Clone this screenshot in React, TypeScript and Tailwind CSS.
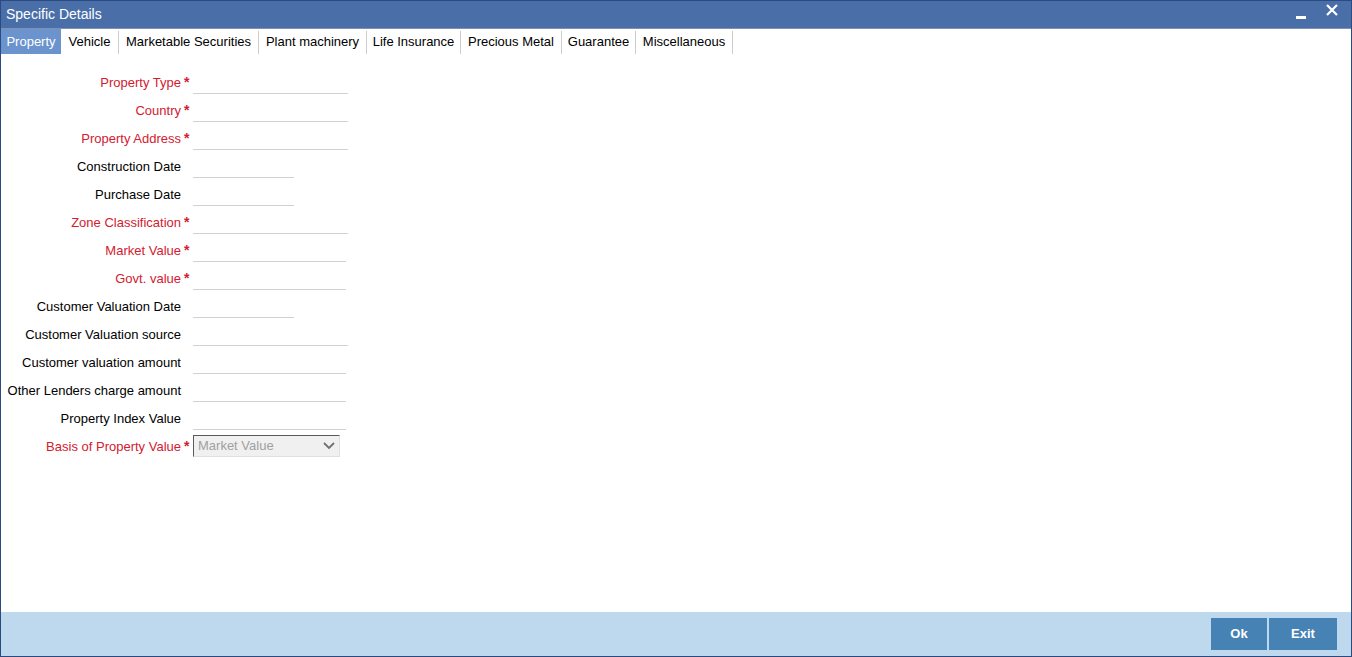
import React from "react";

type Row = { label: string; req?: boolean; w: number };

const rows: Row[] = [
  { label: "Property Type", req: true, w: 155 },
  { label: "Country", req: true, w: 155 },
  { label: "Property Address", req: true, w: 155 },
  { label: "Construction Date", w: 101 },
  { label: "Purchase Date", w: 101 },
  { label: "Zone Classification", req: true, w: 155 },
  { label: "Market Value", req: true, w: 153 },
  { label: "Govt. value", req: true, w: 153 },
  { label: "Customer Valuation Date", w: 101 },
  { label: "Customer Valuation source", w: 155 },
  { label: "Customer valuation amount", w: 153 },
  { label: "Other Lenders charge amount", w: 153 },
  { label: "Property Index Value", w: 153 },
];

const tabs: { t: string; w: number }[] = [
  { t: "Property", w: 60 },
  { t: "Vehicle", w: 58 },
  { t: "Marketable Securities", w: 140 },
  { t: "Plant machinery", w: 108 },
  { t: "Life Insurance", w: 94 },
  { t: "Precious Metal", w: 101 },
  { t: "Guarantee", w: 74 },
  { t: "Miscellaneous", w: 97 },
];

export default function App() {
  return (
    <div
      className="w-[1352px] h-[657px] flex flex-col border border-[#2b4a7f] bg-white overflow-hidden text-[13px] text-black"
      style={{ fontFamily: '"Liberation Sans", Arial, sans-serif' }}
    >
      <div className="h-[28px] shrink-0 bg-[#4a6fa8] border-b border-[#7f93ae] flex items-center justify-between pl-[5px] pr-[13px]">
        <span className="text-white text-[14px]">Specific Details</span>
        <div className="flex items-center gap-[20px]">
          <svg width="10" height="20" viewBox="0 0 10 20">
            <rect x="0" y="11" width="10" height="3" fill="white" />
          </svg>
          <svg width="12" height="12" viewBox="0 0 12 12" className="-mt-[9px]">
            <path d="M1 1 L11 11 M11 1 L1 11" stroke="white" strokeWidth="2.2" />
          </svg>
        </div>
      </div>
      <div className="h-[25px] shrink-0 flex items-stretch">
        {tabs.map((tb, i) => (
          <div
            key={tb.t}
            style={{ width: tb.w }}
            className={
              i === 0
                ? "flex items-center justify-center bg-[#6b93cd] text-white"
                : "flex items-center justify-center border-r border-[#cccccc] mt-[2px]"
            }
          >
            <span className={i === 0 ? "" : "-mt-[2px]"}>{tb.t}</span>
          </div>
        ))}
      </div>
      <div className="flex-1 pt-[15px]">
        {rows.map((r) => (
          <div key={r.label} className="h-[28px] flex items-center">
            <div className={"w-[180px] text-right " + (r.req ? "text-[#d3202f]" : "text-black")}>
              {r.label}
            </div>
            <div className="w-[12px] pl-[3px] text-[#d3202f] text-[14px] font-bold self-start pt-[3px]">
              {r.req ? "*" : ""}
            </div>
            <div className="h-[22px] border-b border-[#d2d2d2]" style={{ width: r.w }} />
          </div>
        ))}
        <div className="h-[28px] flex items-center">
          <div className="w-[180px] text-right text-[#d3202f]">Basis of Property Value</div>
          <div className="w-[12px] pl-[3px] text-[#d3202f] text-[14px] font-bold self-start pt-[3px]">*</div>
          <div className="w-[147px] h-[22px] -mt-[2px] bg-[#f0f0f0] border border-[#e0e0e0] border-t-[#5a5a5a] border-l-[#5a5a5a] flex items-center justify-between pl-[4px] pr-[4px] text-[#a0a0a0]">
            <span>Market Value</span>
            <svg width="12" height="8" viewBox="0 0 12 8">
              <path d="M1 1 L6 6 L11 1" stroke="#707070" strokeWidth="1.8" fill="none" />
            </svg>
          </div>
        </div>
      </div>
      <div className="h-[44px] shrink-0 bg-[#bed9ed] flex justify-end items-start pt-[6px] pr-[14px] gap-[2px]">
        <button className="w-[56px] h-[32px] bg-[#4682b4] text-white font-bold text-[13px]">Ok</button>
        <button className="w-[68px] h-[32px] bg-[#4682b4] text-white font-bold text-[13px]">Exit</button>
      </div>
    </div>
  );
}
